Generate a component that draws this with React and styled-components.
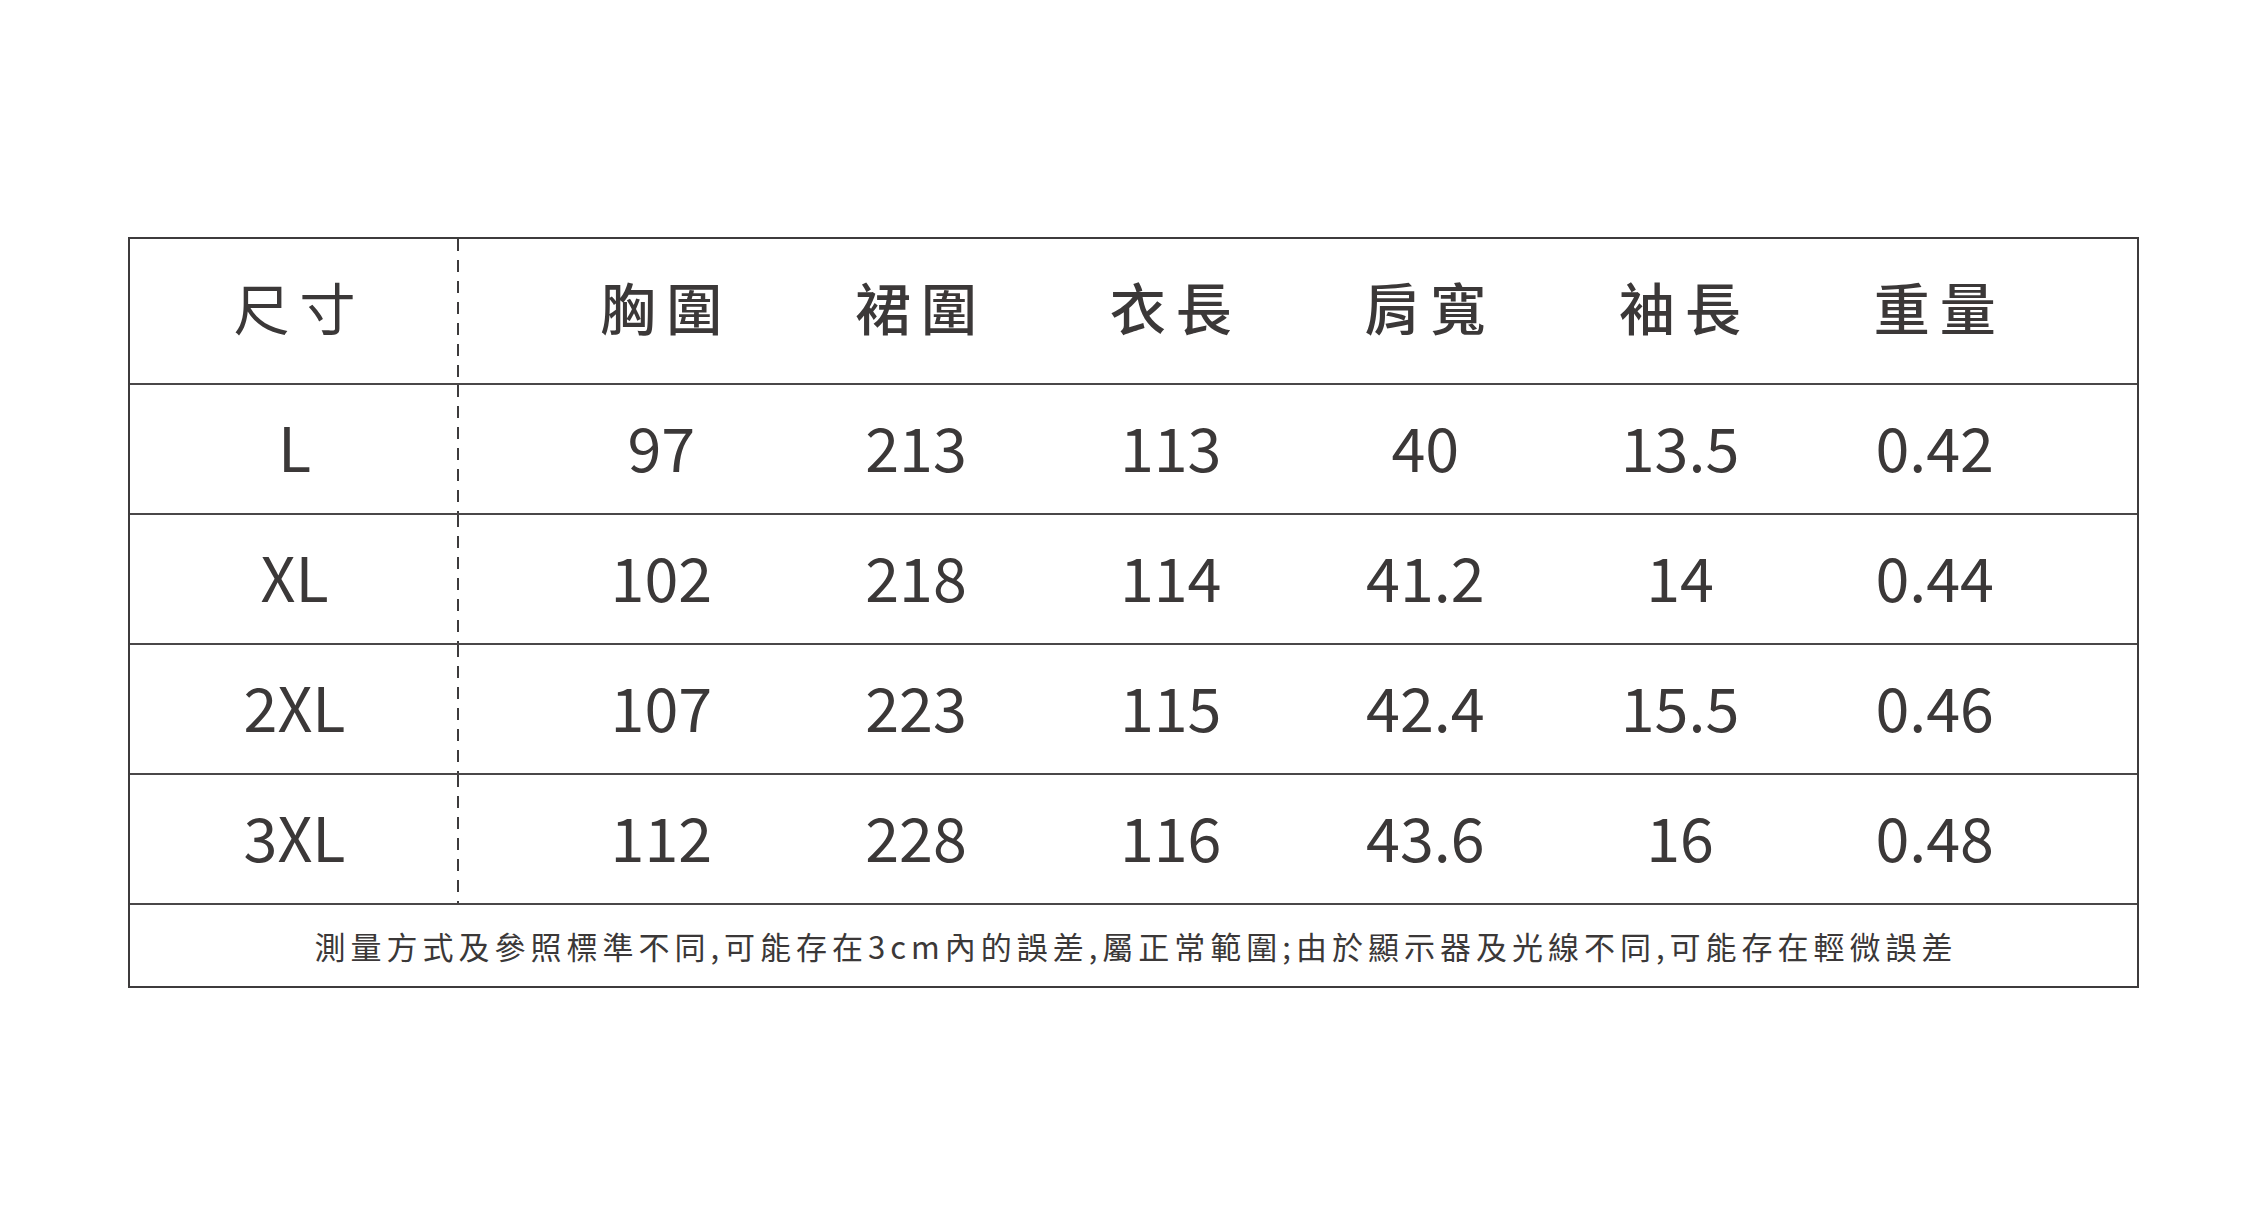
import styled, { createGlobalStyle } from "styled-components"

const GlobalStyle = createGlobalStyle`
    html, body {
        margin: 0;
        padding: 0;
        background: #ffffff;
    }
    body {
        font-family: "Noto Sans CJK TC", "Noto Sans", sans-serif;
        color: #3b3838;
    }
`

const headers = ["胸圍", "裙圍", "衣長", "肩寬", "袖長", "重量"]

const rows = [
    { size: "L", values: ["97", "213", "113", "40", "13.5", "0.42"] },
    { size: "XL", values: ["102", "218", "114", "41.2", "14", "0.44"] },
    { size: "2XL", values: ["107", "223", "115", "42.4", "15.5", "0.46"] },
    { size: "3XL", values: ["112", "228", "116", "43.6", "16", "0.48"] },
]

export default function App() {
    return (
        <Page>
            <GlobalStyle />
            <Table>
                <Row height={144}>
                    <SizeCell header>尺寸</SizeCell>
                    <DataGroup>
                        {headers.map((h) => (
                            <HeadCell key={h}>{h}</HeadCell>
                        ))}
                    </DataGroup>
                </Row>

                {rows.map((row) => (
                    <Row key={row.size} height={128}>
                        <SizeCell>{row.size}</SizeCell>
                        <DataGroup>
                            {row.values.map((v, i) => (
                                <ValueCell key={i}>{v}</ValueCell>
                            ))}
                        </DataGroup>
                    </Row>
                ))}

                <Note>測量方式及參照標準不同,可能存在3cm內的誤差,屬正常範圍;由於顯示器及光線不同,可能存在輕微誤差</Note>
            </Table>
        </Page>
    )
}

const Page = styled.div`
    padding: 237px 0 0 128px;
    min-height: 1219px;
    box-sizing: border-box;
`

const Table = styled.div`
    width: 2011px;
    box-sizing: border-box;
    border: 2.5px solid #3d3b3c;
    display: flex;
    flex-direction: column;
`

const Row = styled.div`
    display: flex;
    flex-direction: row;
    height: ${(p) => p.height}px;
    border-bottom: 2px solid #4a4748;
`

const SizeCell = styled.div`
    width: 329px;
    flex-shrink: 0;
    display: flex;
    align-items: center;
    justify-content: center;
    font-size: ${(p) => (p.header ? "56px" : "61px")};
    letter-spacing: ${(p) => (p.header ? "10px" : "0px")};
    padding-left: ${(p) => (p.header ? "10px" : "0px")};
    padding-bottom: ${(p) => (p.header ? "12px" : "8px")};
    box-sizing: border-box;
    background-image: linear-gradient(to bottom, #3d3b3c 0, #3d3b3c 12px, transparent 12px);
    background-size: 2px 21px;
    background-repeat: repeat-y;
    background-position: right top;
`

const DataGroup = styled.div`
    flex: 1;
    display: grid;
    grid-template-columns: repeat(6, 1fr);
    padding: 0 75px;
`

const HeadCell = styled.div`
    display: flex;
    align-items: center;
    justify-content: center;
    font-size: 56px;
    font-weight: 500;
    letter-spacing: 10px;
    padding-left: 10px;
    padding-bottom: 12px;
`

const ValueCell = styled.div`
    display: flex;
    align-items: center;
    justify-content: center;
    font-size: 61px;
    padding-bottom: 8px;
`

const Note = styled.div`
    height: 81px;
    display: flex;
    align-items: center;
    justify-content: center;
    font-size: 31px;
    letter-spacing: 5px;
    padding-left: 5px;
`
